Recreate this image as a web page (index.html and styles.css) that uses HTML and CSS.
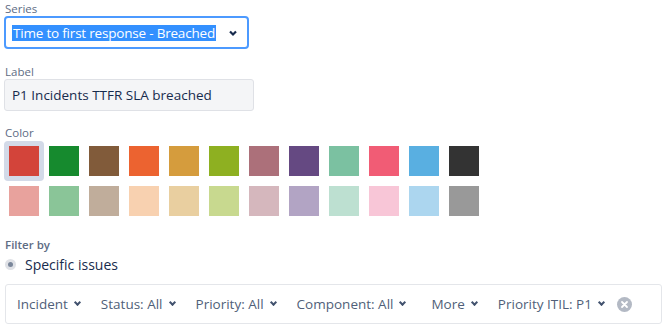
FILE: index.html
```html
<!DOCTYPE html>
<html lang="en">
  <head>
    <meta charset="UTF-8" />
    <title>Series settings</title>
    <link rel="stylesheet" href="styles.css">
  </head>
  <body>
    <div class="form">
      <div class="field series-field">
        <div class="field-label">Series</div>
        <div class="select focused">
          <span class="select-value">Time to first response - Breached</span>
          <svg class="chevron" width="10" height="8" viewBox="0 0 10 8">
            <polyline points="2 2.5 5 5.5 8 2.5" fill="none" stroke="#172b4d" stroke-width="2.2" />
          </svg>
        </div>
      </div>

      <div class="field label-field">
        <div class="field-label">Label</div>
        <div class="text-input">P1 Incidents TTFR SLA breached</div>
      </div>

      <div class="field color-field">
        <div class="field-label">Color</div>
        <div class="swatches">
          <div class="swatch selected"><span style="background:#d3443a"></span></div>
          <div class="swatch"><span style="background:#168a2e"></span></div>
          <div class="swatch"><span style="background:#815b3a"></span></div>
          <div class="swatch"><span style="background:#ec6330"></span></div>
          <div class="swatch"><span style="background:#d59c3d"></span></div>
          <div class="swatch"><span style="background:#8eb021"></span></div>
          <div class="swatch"><span style="background:#ac707a"></span></div>
          <div class="swatch"><span style="background:#654982"></span></div>
          <div class="swatch"><span style="background:#7bc1a1"></span></div>
          <div class="swatch"><span style="background:#f15c75"></span></div>
          <div class="swatch"><span style="background:#59afe1"></span></div>
          <div class="swatch"><span style="background:#333333"></span></div>

          <div class="swatch"><span style="background:#e8a29d"></span></div>
          <div class="swatch"><span style="background:#8ac598"></span></div>
          <div class="swatch"><span style="background:#c0ad9b"></span></div>
          <div class="swatch"><span style="background:#f8d1b0"></span></div>
          <div class="swatch"><span style="background:#e9cfa0"></span></div>
          <div class="swatch"><span style="background:#c8d98f"></span></div>
          <div class="swatch"><span style="background:#d5b7bd"></span></div>
          <div class="swatch"><span style="background:#b2a4c4"></span></div>
          <div class="swatch"><span style="background:#bde0d1"></span></div>
          <div class="swatch"><span style="background:#f8c6d7"></span></div>
          <div class="swatch"><span style="background:#acd6ef"></span></div>
          <div class="swatch"><span style="background:#999999"></span></div>
        </div>
      </div>

      <div class="field filter-field">
        <div class="field-label strong">Filter by</div>
        <label class="radio">
          <span class="radio-dot"></span>
          <span>Specific issues</span>
        </label>
        <div class="filter-bar">
          <button class="filter-btn">Incident <i class="caret"></i></button>
          <button class="filter-btn">Status: All <i class="caret"></i></button>
          <button class="filter-btn">Priority: All <i class="caret"></i></button>
          <button class="filter-btn">Component: All <i class="caret"></i></button>
          <button class="filter-btn more">More <i class="caret"></i></button>
          <button class="filter-btn">Priority ITIL: P1 <i class="caret"></i></button>
          <span class="clear">
            <svg width="15" height="15" viewBox="0 0 15 15">
              <circle cx="7.5" cy="7.5" r="7.5" fill="#b3b9c4" />
              <path d="M5 5 L10 10 M10 5 L5 10" stroke="#fff" stroke-width="1.8" stroke-linecap="round" />
            </svg>
          </span>
        </div>
      </div>
    </div>
  </body>
</html>
```

FILE: styles.css
```css
* {
  margin: 0;
  padding: 0;
  box-sizing: border-box;
}

body {
  font-family: "Open Sans", "Noto Sans", sans-serif;
  font-size: 13.5px;
  color: #172b4d;
  background: #ffffff;
}

.form {
  padding: 2px 4px 0 4px;
}

.field-label {
  font-size: 11.5px;
  line-height: 14px;
  color: #5e6c84;
  padding-left: 1px;
}

.field-label.strong {
  font-weight: 600;
}

/* Series select */
.select {
  display: flex;
  align-items: center;
  justify-content: space-between;
  width: 245px;
  height: 33px;
  border: 2px solid #4c9aff;
  border-radius: 4px;
  padding: 0 9px 0 6px;
}

.select-value {
  background: #3390ff;
  color: #ffffff;
  line-height: 16px;
  padding: 0 1px;
  letter-spacing: -0.2px;
}

.chevron {
  display: block;
}

/* Label input */
.label-field {
  margin-top: 16px;
}

.text-input {
  width: 250px;
  height: 32px;
  line-height: 30px;
  background: #f4f5f7;
  border: 1px solid #dfe1e6;
  border-radius: 3px;
  padding-left: 7px;
}

/* Colors */
.color-field {
  margin-top: 15px;
}

.swatches {
  display: grid;
  grid-template-columns: repeat(12, 40px);
  grid-auto-rows: 40px;
  margin-top: 1px;
}

.swatch {
  padding: 5px;
  border-radius: 4px;
}

.swatch span {
  display: block;
  width: 30px;
  height: 30px;
}

.swatch.selected {
  background: #d3dae8;
}

/* Filter */
.filter-field {
  margin-top: 17px;
}

.radio {
  display: flex;
  align-items: center;
  gap: 9px;
  height: 18px;
  margin-top: 3px;
  font-size: 14px;
  color: #172b4d;
}

.radio-dot {
  width: 11px;
  height: 11px;
  border-radius: 50%;
  background: #dfe1e6;
  margin-left: 1px;
  position: relative;
}

.radio-dot::after {
  content: "";
  position: absolute;
  left: 3px;
  top: 3px;
  width: 5px;
  height: 5px;
  border-radius: 50%;
  background: #7a869a;
}

.filter-bar {
  display: flex;
  align-items: center;
  gap: 21px;
  width: 657px;
  height: 40px;
  margin-top: 11px;
  margin-left: 1px;
  padding-left: 11px;
  border: 1px solid #e4e6ea;
  border-radius: 3px;
}

.filter-btn {
  display: flex;
  align-items: center;
  gap: 5px;
  font-family: inherit;
  font-size: 13.5px;
  color: #505f79;
  background: none;
  border: none;
}

.filter-btn.more {
  margin-left: 5px;
}

.caret {
  width: 5px;
  height: 5px;
  border-right: 2px solid #42526e;
  border-bottom: 2px solid #42526e;
  transform: rotate(45deg);
  margin-top: -3px;
  margin-left: 2px;
}

.clear {
  display: flex;
  margin-left: -8px;
}
```
